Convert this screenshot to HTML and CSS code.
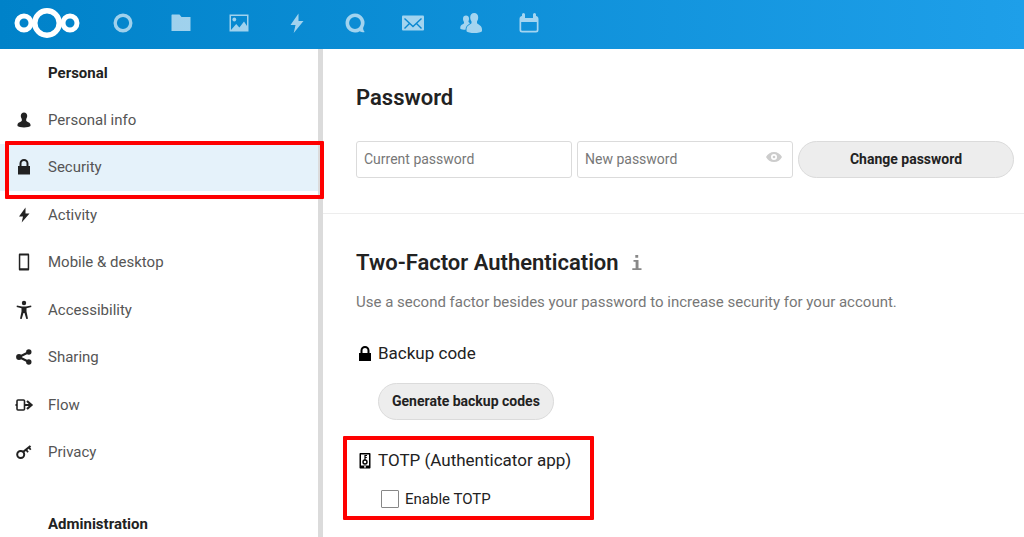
FILE: index.html
```
<!DOCTYPE html>
<html lang="en">
<head>
<meta charset="utf-8">
<meta name="viewport" content="width=device-width, initial-scale=1">
<title>Security - Settings</title>
<link rel="stylesheet" href="styles.css">
</head>
<body>
<header class="topbar">
  <a class="logo" href="#" aria-label="Home">
    <svg class="outline" width="68" height="32" viewBox="0 0 68 32"><circle cx="34" cy="16" r="12.2" stroke-width="5.4"/><circle cx="11" cy="16" r="7" stroke-width="5"/><circle cx="57" cy="16" r="7" stroke-width="5"/></svg>
  </a>
  <nav class="apps" aria-label="Apps">
    <a class="app" href="#" aria-label="Dashboard"><svg viewBox="0 0 20 20"><circle cx="10" cy="10" r="7.8" fill="none" stroke="currentColor" stroke-width="3.4"/></svg></a>
    <a class="app" href="#" aria-label="Files"><svg viewBox="0 0 20 20"><path d="M1 1.5h7.500l2 2.500H19.500V18H.5V2z"/></svg></a>
    <a class="app" href="#" aria-label="Photos"><svg viewBox="0 0 20 20"><path fill-rule="evenodd" d="M.5 1.500h19v17H.5zM2 3v14l5.200-6 3.200 3.500L15 8.500l3 4.500V3z"/><circle cx="5.300" cy="6.500" r="1.900"/></svg></a>
    <a class="app" href="#" aria-label="Activity"><svg viewBox="0 0 20 20"><path d="M11.500.5 3.500 12h5l-1.800 8L16.500 8h-5z"/></svg></a>
    <a class="app" href="#" aria-label="Talk"><svg viewBox="0 0 20 20"><path fill-rule="evenodd" d="M10 .5a9.500 9.500 0 1 0 4.800 17.700c1.300.8 3 1.300 4.400 1.100.4-.1.400-.5.200-.8-.9-1-1.300-2.600-1.300-3.600A9.500 9.500 0 0 0 10 .5zm0 3.600a5.900 5.900 0 1 1 0 11.800 5.900 5.900 0 0 1 0-11.800z"/></svg></a>
    <a class="app" href="#" aria-label="Mail"><svg class="wide" viewBox="0 0 22 20"><rect y="2.500" width="22" height="15" rx="1"/><path d="m2.500 5.500 8.500 8 8.500-8M2.500 15.500l5-5M19.500 15.500l-5-5" fill="none" stroke="#0988d1" stroke-width="1.400"/></svg></a>
    <a class="app" href="#" aria-label="Contacts"><svg class="wide" viewBox="0 0 22 20"><path d="M14.200 0c-2.500 0-4 1.700-4 4.200 0 2 .6 3 1.300 4.300v1.800c-1.300 1.700-5 2-5 6.200v1.700c1.500 2.400 14 2.400 15.500 0v-1.700c0-4.200-3.700-4.500-5-6.200V8.500c.7-1.300 1.200-2.300 1.200-4.300 0-2.500-1.500-4.200-4-4.200z"/><path d="M6 2.500C4.200 2.500 3 3.700 3 5.700c0 1.500.4 2.200 1 3.300v1.200c-1 1.200-3.700 1.400-3.700 4.600v1c1 .9 3 1 5.200 1 0-3.300 1.800-4.600 4.500-6.600L8.500 9V8.200c.3-.7.600-1.500.5-2.600C9 3.700 7.800 2.500 6 2.500z"/></svg></a>
    <a class="app" href="#" aria-label="Calendar"><svg viewBox="0 0 20 20"><path fill-rule="evenodd" d="M3 3V1.500a1.500 1.500 0 0 1 3 0V5h8V1.500a1.500 1.500 0 0 1 3 0V3c1.500.3 2.500 1.300 2.500 3v11a2.500 2.500 0 0 1-2.500 2.500H3A2.500 2.500 0 0 1 .5 17V6C.5 4.300 1.500 3.300 3 3zm-.8 6v8c0 .5.300.8.800.8h14c.5 0 .8-.3.800-.8V9z"/></svg></a>
  </nav>
</header>
<div class="layout">
  <nav class="sidebar" aria-label="Settings">
    <h2 class="caption">Personal</h2>
    <ul class="menu">
      <li><a class="item" href="#"><svg viewBox="0 0 16 16"><path d="M8 .5C6.100.5 4.800 1.800 4.800 3.800c0 1.500.5 2.300 1 3.200v1.700C4.800 10.300 1.500 10.200 1.500 12.900v1.200c1.300 1.700 11.700 1.700 13 0v-1.200c0-2.700-3.300-2.600-4.300-4.200V7c.5-.9 1-1.700 1-3.200C11.200 1.800 9.900.5 8 .5z"/></svg>Personal info</a></li>
      <li class="marked"><a class="item active" href="#" aria-current="page"><svg viewBox="0 0 16 16"><path fill-rule="evenodd" d="M8 0a4.500 4.500 0 0 0-4.500 4.500V7H2v8.500h12V7h-1.500V4.500A4.500 4.500 0 0 0 8 0zm0 2a2.500 2.500 0 0 1 2.500 2.500V7h-5V4.500A2.500 2.500 0 0 1 8 2z"/></svg>Security</a></li>
      <li><a class="item" href="#"><svg viewBox="0 0 16 16"><path d="M9.500.5 3 9.500h4L5.700 15.500 13.500 6.500h-4z"/></svg>Activity</a></li>
      <li><a class="item" href="#"><svg viewBox="0 0 16 16"><path fill-rule="evenodd" d="M4-.5h8c.8 0 1.200.4 1.200 1.200v14.600c0 .8-.4 1.200-1.200 1.200H4c-.8 0-1.200-.4-1.200-1.200V.7C2.800-.1 3.200-.5 4-.5zm.3 1.900v12.800h7.400V1.400z"/></svg>Mobile &amp; desktop</a></li>
      <li><a class="item" href="#"><svg viewBox="0 0 16 16"><circle cx="8" cy="1" r="2.200"/><path d="M.9 3.500 6 4.600h4l5.100-1.100.3 1.400L10.500 6.200v3.300l1.500 7.300-1.700.3L8.500 11h-1l-1.800 6.100-1.700-.3 1.500-7.300V6.200L.6 4.900z"/></svg>Accessibility</a></li>
      <li><a class="item" href="#"><svg viewBox="0 0 16 16"><path d="M13 3 3 8l10 5" fill="none" stroke="currentColor" stroke-width="2.200"/><circle cx="12.800" cy="3" r="2.700"/><circle cx="3" cy="8" r="2.900"/><circle cx="12.800" cy="13" r="2.700"/></svg>Sharing</a></li>
      <li><a class="item" href="#"><svg class="outline" viewBox="0 0 16 16" stroke-width="1.600"><rect x="1" y="3" width="7.500" height="10" rx="1"/><path d="M-.5 8H1M8.500 8H15M11 4l4.500 4-4.500 4" stroke-width="2.200"/></svg>Flow</a></li>
      <li><a class="item" href="#"><svg class="outline" viewBox="0 0 16 16"><circle cx="4.700" cy="10.500" r="3.500" stroke-width="2"/><path d="m7 8 7.500-6" stroke-width="2.200"/><path d="m10 5.500 2 2.700M13 3.500l1.700 2.200" stroke-width="1.800"/></svg>Privacy</a></li>
    </ul>
    <h2 class="caption">Administration</h2>
  </nav>
  <main class="content">
    <section class="section">
      <h2 class="title">Password</h2>
      <form class="password-form">
        <input class="field" type="password" placeholder="Current password" aria-label="Current password">
        <div class="reveal">
          <input class="field" type="password" placeholder="New password" aria-label="New password">
          <button class="eye" type="button" aria-label="Show password"><svg width="16" height="16" viewBox="0 0 16 16"><path fill-rule="evenodd" d="M8 3C4.500 3 1.500 5 0 8c1.500 3 4.500 5 8 5s6.500-2 8-5c-1.500-3-4.500-5-8-5zm0 2a3 3 0 1 1 0 6 3 3 0 0 1 0-6z"/><circle cx="8" cy="8" r="1.300"/></svg></button>
        </div>
        <button class="pill" type="button">Change password</button>
      </form>
    </section>
    <section class="section two-factor">
      <h2 class="title">Two-Factor Authentication <a class="info" href="#" aria-label="Documentation"><svg width="10" height="16" viewBox="0 0 10 16"><path d="M3.300 0h2.900v2.700H3.300zM1.500 5h5v8.200h3V15H.3v-1.800h3.300V6.800H1.500z"/></svg></a></h2>
      <p class="hint">Use a second factor besides your password to increase security for your account.</p>
      <div class="provider">
        <h3 class="provider-name"><svg viewBox="0 0 16 16"><path fill-rule="evenodd" d="M8 1a4.500 4.500 0 0 0-4.500 4.500V8H2v8h12V8h-1.500V5.500A4.500 4.500 0 0 0 8 1zm0 2a2.500 2.500 0 0 1 2.500 2.500V8h-5V5.500A2.500 2.500 0 0 1 8 3z"/></svg>Backup code</h3>
        <button class="pill generate" type="button">Generate backup codes</button>
      </div>
      <div class="provider totp">
        <h3 class="provider-name"><svg viewBox="0 0 16 16"><path fill-rule="evenodd" d="M3.500 1h9c.6 0 1 .4 1 1v13.500c0 .6-.4 1-1 1h-9c-.6 0-1-.4-1-1V2c0-.6.400-1 1-1zM4 2.500v11h8v-11z"/><path d="M8 8V3.500h2M8 5.500h1.800" fill="none" stroke="#000" stroke-width="1.200"/><circle cx="8" cy="10" r="2" fill="none" stroke="#000" stroke-width="1.400"/><path d="M7 14.300h2v1.300H7z" fill="#fff"/></svg>TOTP (Authenticator app)</h3>
        <label class="check"><input type="checkbox">Enable TOTP</label>
      </div>
    </section>
  </main>
</div>
</body>
</html>
```
FILE: styles.css
```
* { box-sizing: border-box; }

body {
  margin: 0;
  height: 100vh;
  overflow: hidden;
  display: flex;
  flex-direction: column;
  font-family: Roboto, "Liberation Sans", sans-serif;
  font-size: 15px;
  line-height: 24px;
  color: #222;
  background: #fff;
}

h2, h3, p, ul { margin: 0; padding: 0; }
a { color: inherit; text-decoration: none; }
svg { display: block; flex: none; fill: currentColor; overflow: visible; }
.outline { fill: none; stroke: currentColor; }
button, input { font: inherit; }

.topbar {
  flex: none;
  height: 49px;
  padding: 0 13px 4px;
  display: flex;
  align-items: center;
  gap: 13px;
  background: linear-gradient(90deg, #0082c9, #1e9fe9);
}

.logo { color: #fff; }
.apps { display: flex; }

.app {
  width: 58px;
  display: flex;
  justify-content: center;
  color: rgba(255, 255, 255, .62);
}

.app svg { width: 20px; height: 20px; }
.app .wide { width: 22px; }

.layout { flex: 1; min-height: 0; display: flex; }

.sidebar {
  flex: none;
  width: 323px;
  border-right: 5px solid #dbdbdb;
}

.caption {
  padding: 12px 48px 11px;
  font-size: 15px;
  line-height: 24px;
  font-weight: 700;
}

.menu {
  list-style: none;
  min-height: 380px;
  margin-bottom: 24px;
  display: grid;
  grid-auto-rows: 1fr;
}

.menu li { display: grid; }
.marked { position: relative; }

.marked::after {
  content: "";
  position: absolute;
  inset: -3px -6px -8px 5px;
  border: 4px solid #fe0000;
  border-radius: 1px;
  pointer-events: none;
}

.item {
  display: flex;
  align-items: center;
  gap: 16px;
  padding-left: 16px;
  color: #555;
}

.item svg { width: 16px; height: 16px; color: #222; }
.active { background: #e5f2fa; }

.content { flex: 1; min-width: 0; }

.section {
  padding: 33px 10px 35px 33px;
  border-bottom: 1px solid #ededed;
}

.two-factor { border-bottom: 0; }

.title {
  display: flex;
  align-items: center;
  gap: 13px;
  font-size: 22px;
  line-height: 32px;
  font-weight: 600;
}

.info { color: #888; }

.password-form {
  margin-top: 27px;
  display: grid;
  grid-template-columns: repeat(3, 1fr);
  gap: 5px;
}

.reveal { position: relative; }

.field {
  display: block;
  width: 100%;
  height: 37px;
  padding: 0 7px 2px;
  border: 1px solid #dbdbdb;
  border-radius: 3px;
  background: #fff;
  color: #222;
  font-size: 14px;
}

.field::placeholder { color: #777; opacity: 1; }

.eye {
  position: absolute;
  right: 11px;
  top: 8px;
  padding: 0;
  border: 0;
  background: none;
  color: #ccc;
}

.pill {
  height: 37px;
  padding: 0 13px 2px;
  border: 1px solid #dbdbdb;
  border-radius: 19px;
  background: #ededed;
  color: #222;
  font-size: 14px;
  font-weight: 700;
}

.hint { margin-top: 11px; color: #777; }
.provider { margin-top: 27px; padding-left: 1px; }

.provider-name {
  display: flex;
  align-items: center;
  gap: 5px;
  font-size: 17px;
  line-height: 24px;
  font-weight: 400;
}

.provider-name svg { width: 16px; height: 16px; color: #000; }
.generate { margin: 18px 0 0 21px; }

.totp {
  position: relative;
  width: max-content;
  margin-top: 28px;
}

.totp::after {
  content: "";
  position: absolute;
  inset: -12px -23px -9px -13px;
  border: 4px solid #fe0000;
  border-radius: 1px;
  pointer-events: none;
}

.check {
  display: flex;
  align-items: center;
  gap: 6px;
  margin: 15px 0 0 24px;
}

.check input {
  appearance: none;
  width: 18px;
  height: 18px;
  margin: 0;
  border: 1px solid #878787;
  border-radius: 1px;
  background: #fff;
}
```
